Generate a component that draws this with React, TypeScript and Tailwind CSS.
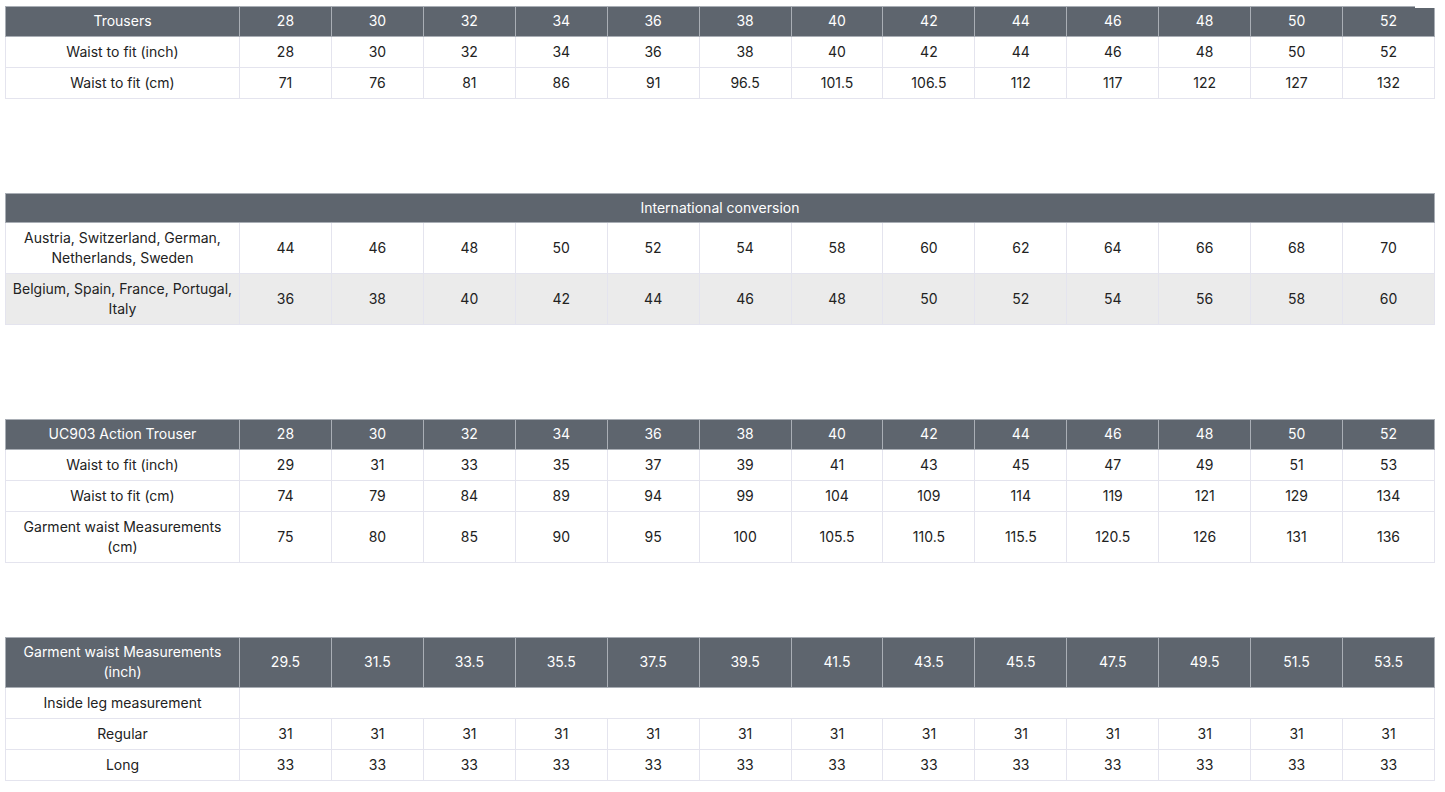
import React from 'react'

type Row = { label: React.ReactNode; values: string[]; shade?: boolean }

const sizes = ['28', '30', '32', '34', '36', '38', '40', '42', '44', '46', '48', '50', '52']

const Cols = () => (
  <colgroup>
    <col className="w-[234px]" />
    {sizes.map((s) => (
      <col key={s} />
    ))}
  </colgroup>
)

const HeadRow = ({ label, values }: { label: React.ReactNode; values: string[] }) => (
  <tr className="bg-[#5e656e] text-white">
    <th className="whitespace-nowrap border border-[#a9aeb5] px-1 pt-[4px] pb-[5px] font-normal leading-5">{label}</th>
    {values.map((v, i) => (
      <th key={i} className="border border-[#a9aeb5] px-1 pt-[4px] pb-[5px] font-normal leading-5">
        {v}
      </th>
    ))}
  </tr>
)

const BodyRows = ({ rows }: { rows: Row[] }) => (
  <>
    {rows.map((r, i) => (
      <tr key={i} className={r.shade ? 'bg-[#ebebeb]' : 'bg-white'}>
        <td className="whitespace-nowrap border border-[#e4e4ee] px-1 py-[5px] leading-5">{r.label}</td>
        {r.values.map((v, j) => (
          <td key={j} className="border border-[#e4e4ee] px-1 py-[5px] leading-5">
            {v}
          </td>
        ))}
      </tr>
    ))}
  </>
)

const tableCls = 'w-[1430px] table-fixed border-collapse text-center text-[14px] text-[#222]'

export default function App() {
  return (
    <div
      className="min-h-[792px] bg-white pl-[5px] pt-[6px]"
      style={{ fontFamily: 'Inter, "Noto Sans", sans-serif' }}
    >
      <div className="relative">
        <table className={tableCls}>
          <Cols />
          <thead>
            <HeadRow label="Trousers" values={sizes} />
          </thead>
          <tbody>
            <BodyRows
              rows={[
                { label: 'Waist to fit (inch)', values: sizes },
                {
                  label: 'Waist to fit (cm)',
                  values: ['71', '76', '81', '86', '91', '96.5', '101.5', '106.5', '112', '117', '122', '127', '132'],
                },
              ]}
            />
          </tbody>
        </table>
        <div className="absolute left-[1410px] top-0 h-[2px] w-[22px] bg-white" />
      </div>

      <table className={`${tableCls} mt-[94px]`}>
        <Cols />
        <thead>
          <tr className="bg-[#5e656e] text-white">
            <th colSpan={14} className="border border-[#a9aeb5] px-2 py-[4px] font-normal leading-5">
              International conversion
            </th>
          </tr>
        </thead>
        <tbody>
          <BodyRows
            rows={[
              {
                label: (
                  <>
                    Austria, Switzerland, German,
                    <br />
                    Netherlands, Sweden
                  </>
                ),
                values: ['44', '46', '48', '50', '52', '54', '58', '60', '62', '64', '66', '68', '70'],
              },
              {
                label: (
                  <>
                    Belgium, Spain, France, Portugal,
                    <br />
                    Italy
                  </>
                ),
                values: ['36', '38', '40', '42', '44', '46', '48', '50', '52', '54', '56', '58', '60'],
                shade: true,
              },
            ]}
          />
        </tbody>
      </table>

      <table className={`${tableCls} mt-[94px]`}>
        <Cols />
        <thead>
          <HeadRow label="UC903 Action Trouser" values={sizes} />
        </thead>
        <tbody>
          <BodyRows
            rows={[
              {
                label: 'Waist to fit (inch)',
                values: ['29', '31', '33', '35', '37', '39', '41', '43', '45', '47', '49', '51', '53'],
              },
              {
                label: 'Waist to fit (cm)',
                values: ['74', '79', '84', '89', '94', '99', '104', '109', '114', '119', '121', '129', '134'],
              },
              {
                label: (
                  <>
                    Garment waist Measurements
                    <br />
                    (cm)
                  </>
                ),
                values: ['75', '80', '85', '90', '95', '100', '105.5', '110.5', '115.5', '120.5', '126', '131', '136'],
              },
            ]}
          />
        </tbody>
      </table>

      <table className={`${tableCls} mt-[74px]`}>
        <Cols />
        <thead>
          <HeadRow
            label={
              <>
                Garment waist Measurements
                <br />
                (inch)
              </>
            }
            values={['29.5', '31.5', '33.5', '35.5', '37.5', '39.5', '41.5', '43.5', '45.5', '47.5', '49.5', '51.5', '53.5']}
          />
        </thead>
        <tbody>
          <tr className="bg-white">
            <td className="whitespace-nowrap border border-[#e4e4ee] px-1 py-[5px] leading-5">Inside leg measurement</td>
            <td colSpan={13} className="border border-[#e4e4ee] px-1 py-[5px] leading-5" />
          </tr>
          <BodyRows
            rows={[
              { label: 'Regular', values: Array(13).fill('31') },
              { label: 'Long', values: Array(13).fill('33') },
            ]}
          />
        </tbody>
      </table>
    </div>
  )
}
